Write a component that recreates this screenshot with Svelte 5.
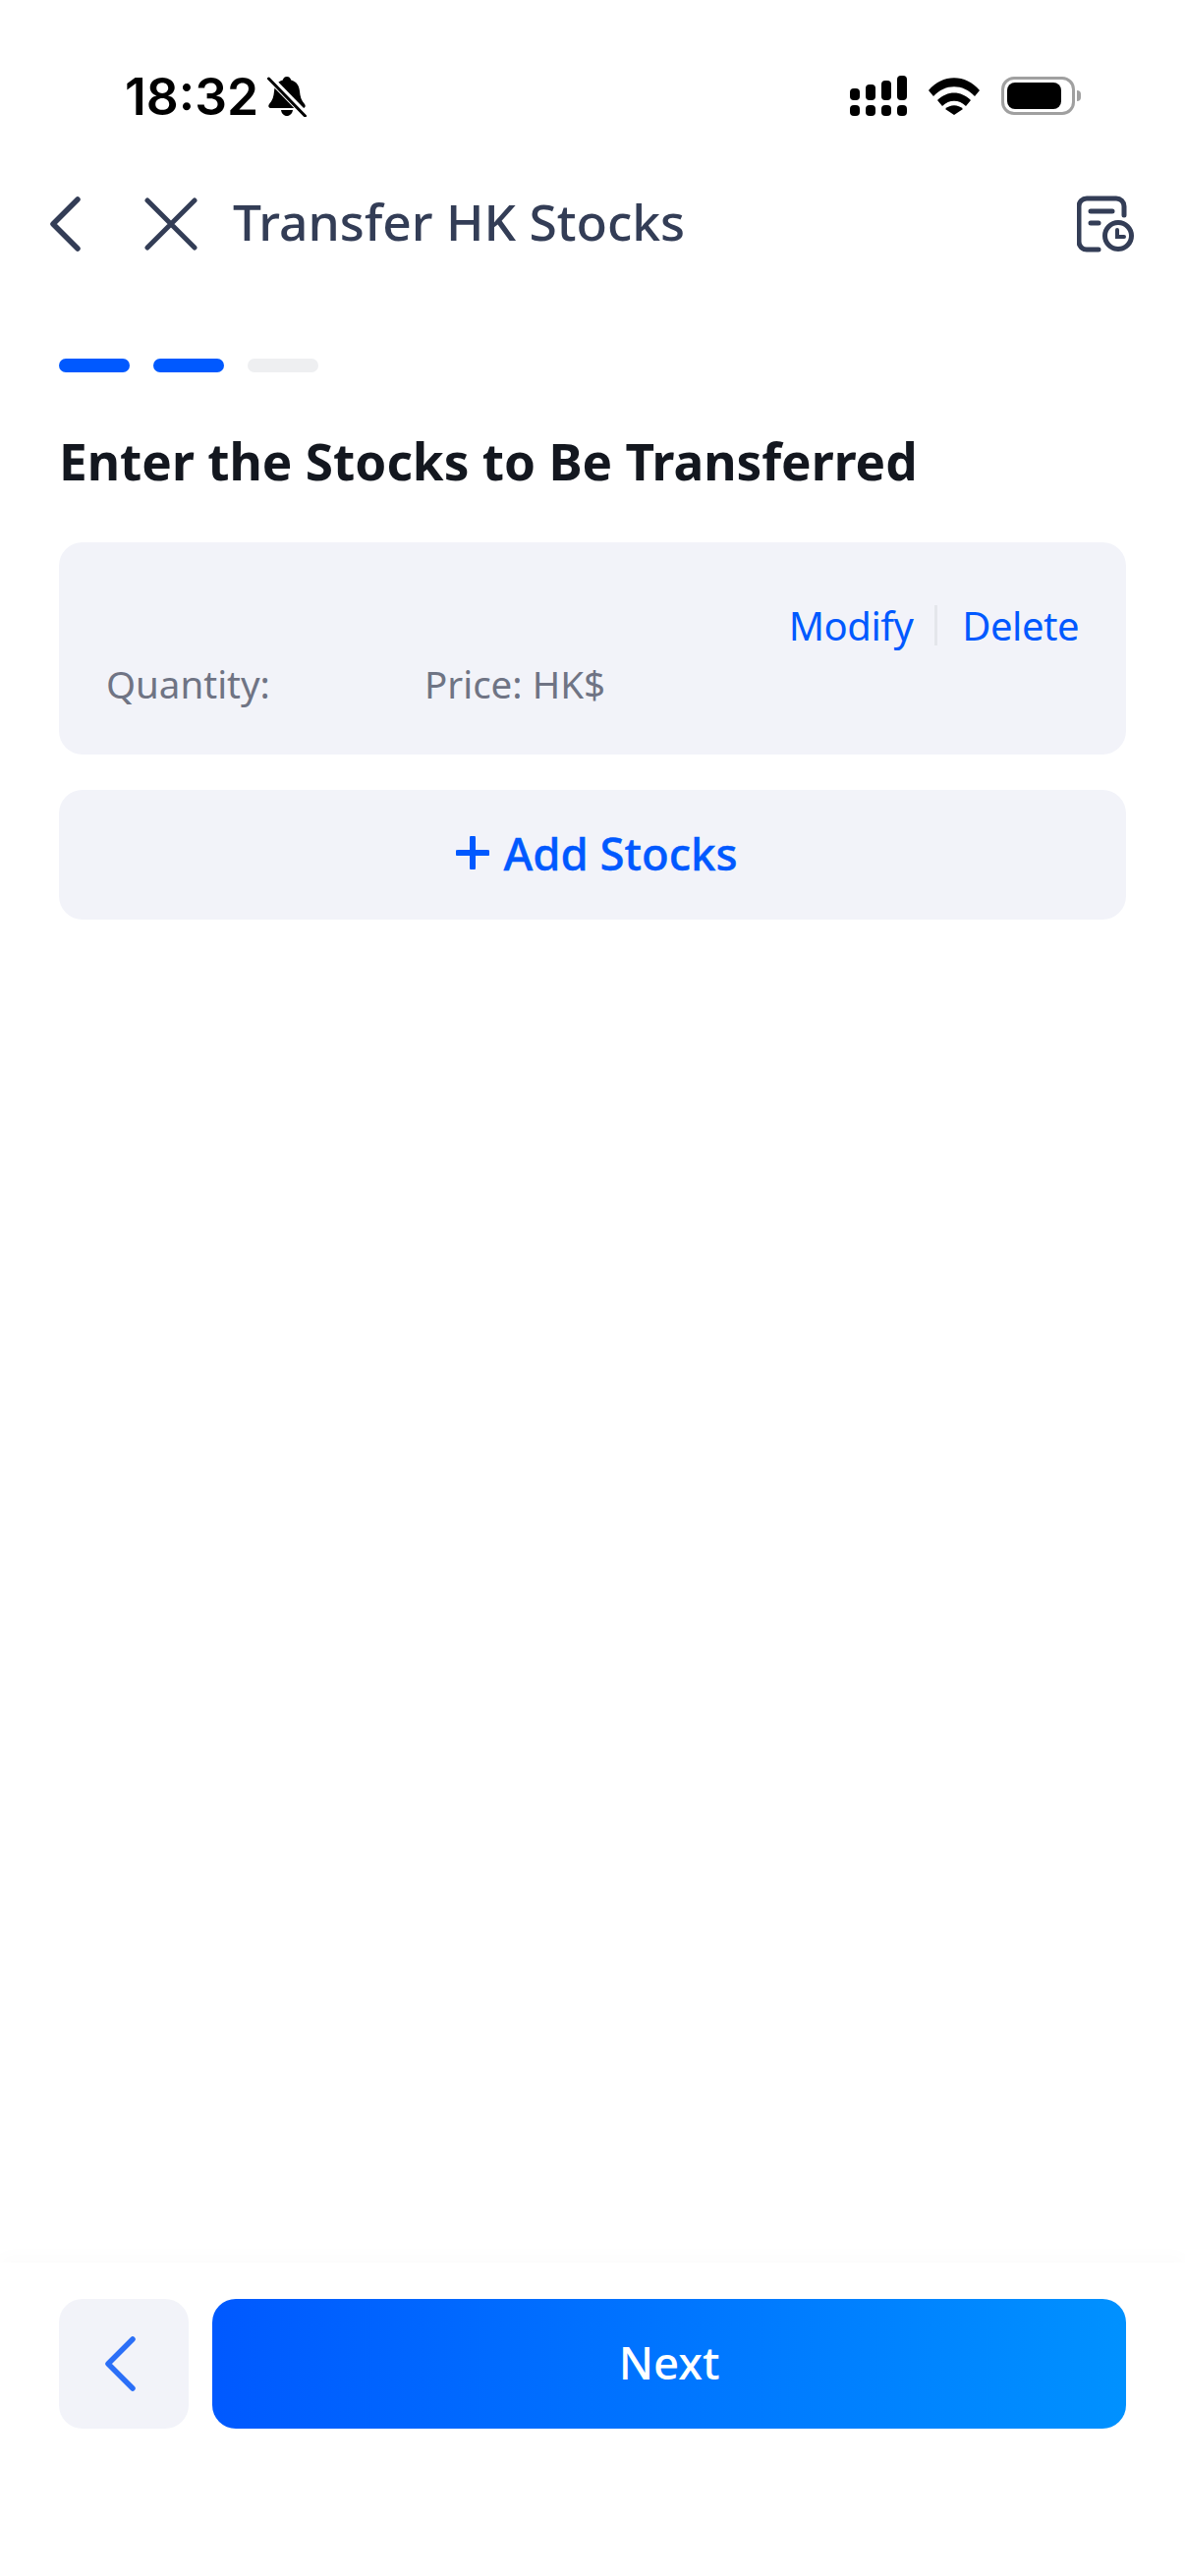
<script lang="ts">
  const steps = [true, true, false];
</script>

<div class="page">
  <!-- iOS status bar -->
  <div class="status">
    <div class="status-left">
      <span class="time">18:32</span>
      <svg class="bell" width="40" height="42" viewBox="0 0 40 42">
        <path d="M20 1c2.400 0 3.800 1.600 4.200 3.500C30 6 32.500 10.500 33 16c.4 5 1.500 9 5 13 1.500 2 .5 4-2 4H4c-2.500 0-3.500-2-2-4 3.500-4 4.600-8 5-13 .5-5.500 3-10 8.800-11.500C16.200 2.600 17.600 1 20 1zM14 35h12c-.5 3.500-3 6-6 6s-5.500-2.500-6-6z" fill="#000" />
        <path d="M2 2 39 40" stroke="#fff" stroke-width="7" />
        <path d="M1.500 3 38.500 41" stroke="#000" stroke-width="3" stroke-linecap="round" />
      </svg>
    </div>
    <div class="status-right">
      <svg width="58" height="41" viewBox="0 0 58 41" fill="#000">
        <rect x="0" y="13" width="10" height="12" rx="4" />
        <rect x="16" y="9" width="10" height="16" rx="4" />
        <rect x="32" y="5" width="10" height="20" rx="4" />
        <rect x="48" y="0" width="10" height="25" rx="4" />
        <rect x="0" y="30" width="10" height="11" rx="4" />
        <rect x="16" y="30" width="10" height="11" rx="4" />
        <rect x="32" y="30" width="10" height="11" rx="4" />
        <rect x="48" y="30" width="10" height="11" rx="4" />
      </svg>
      <svg class="wifi" width="52" height="38" viewBox="0 0 52 38" fill="#000">
        <path d="M0 13C14-4 38-4 52 13l-5 6C35 6 17 6 5 19z" />
        <path d="M9 23c10-10 24-10 34 0l-5 6c-7-7-17-7-24 0z" />
        <path d="M17 32c5-5 13-5 18 0l-9 6z" />
      </svg>
      <div class="battery">
        <div class="battery-body"><div class="battery-fill"></div></div>
        <div class="battery-nub"></div>
      </div>
    </div>
  </div>

  <!-- nav bar -->
  <div class="nav">
    <svg class="nav-back" width="32" height="56" viewBox="0 0 32 56" fill="none">
      <path d="M29 3 4 28l25 25" stroke="#333d56" stroke-width="5.500" stroke-linecap="round" stroke-linejoin="round" />
    </svg>
    <svg class="nav-close" width="54" height="54" viewBox="0 0 54 54" fill="none">
      <path d="M3 3l48 48M51 3 3 51" stroke="#333d56" stroke-width="5" stroke-linecap="round" />
    </svg>
    <span class="nav-title">Transfer HK Stocks</span>
    <svg class="nav-history" width="60" height="58" viewBox="0 0 60 58" fill="none" stroke="#333d56" stroke-linecap="round">
      <path d="M48 20V11a8 8 0 0 0-8-8H10a8 8 0 0 0-8 8v36a8 8 0 0 0 8 8h12" stroke-width="5" />
      <path d="M14 16h22" stroke-width="5" />
      <path d="M14 28h8" stroke-width="5" />
      <circle cx="42" cy="41" r="13.500" stroke-width="5" />
      <path d="M41 35v7h7" stroke-width="4" />
    </svg>
  </div>

  <main class="content">
    <div class="steps">
      {#each steps as done}
        <span class="step" class:done></span>
      {/each}
    </div>

    <h1>Enter the Stocks to Be Transferred</h1>

    <section class="card">
      <div class="actions">
        <span>Modify</span>
        <i class="sep"></i>
        <span>Delete</span>
      </div>
      <div class="meta">
        <span class="qty">Quantity:</span>
        <span>Price: HK$</span>
      </div>
    </section>

    <div class="add">
      <svg width="34" height="34" viewBox="0 0 34 34" fill="none">
        <path d="M17 2v30M2 17h30" stroke="#0059ff" stroke-width="6" stroke-linecap="round" />
      </svg>
      <span>Add Stocks</span>
    </div>
  </main>

  <footer class="footer">
    <div class="prev">
      <svg width="32" height="56" viewBox="0 0 32 56" fill="none">
        <path d="M29 3 4 28l25 25" stroke="#2b6ff7" stroke-width="5.500" stroke-linecap="round" stroke-linejoin="round" />
      </svg>
    </div>
    <div class="next">Next</div>
  </footer>
</div>

<style>
  :global(body) {
    margin: 0;
    background: #fff;
  }

  .page {
    width: 1206px;
    height: 2622px;
    display: flex;
    flex-direction: column;
    font-family: "Noto Sans", "Open Sans", sans-serif;
    overflow: hidden;
  }

  .status {
    height: 140px;
    flex-shrink: 0;
    display: flex;
    justify-content: space-between;
    align-items: flex-start;
    padding: 77px 106px 0 127px;
    box-sizing: border-box;
  }

  .status-left {
    display: flex;
    align-items: center;
    gap: 9px;
    height: 42px;
  }

  .time {
    font-family: Inter, sans-serif;
    font-weight: 600;
    font-size: 51.5px;
    line-height: 38px;
    color: #000;
  }

  .status-right {
    display: flex;
    align-items: center;
    gap: 22px;
  }

  .battery {
    display: flex;
    align-items: center;
    gap: 2px;
  }

  .battery-body {
    width: 75px;
    height: 39px;
    box-sizing: border-box;
    border: 3px solid #a0a0a0;
    border-radius: 13px;
    padding: 3px;
  }

  .battery-fill {
    width: 55px;
    height: 27px;
    background: #000;
    border-radius: 8px;
  }

  .battery-nub {
    width: 4px;
    height: 11px;
    background: #a0a0a0;
    border-radius: 0 4px 4px 0;
  }

  .nav {
    height: 176px;
    flex-shrink: 0;
    display: flex;
    align-items: center;
    padding: 0 50px 0 50px;
    box-sizing: border-box;
  }

  .nav-close {
    margin-left: 65px;
  }

  .nav-title {
    margin-left: 36px;
    font-size: 51.5px;
    line-height: 60px;
    padding-bottom: 6px;
    font-weight: 500;
    color: #333d56;
    flex: 1;
  }

  .content {
    flex: 1;
    padding: 49px 60px 0;
    display: flex;
    flex-direction: column;
  }

  .steps {
    display: flex;
    gap: 24px;
  }

  .step {
    width: 72px;
    height: 14px;
    border-radius: 7px;
    background: #eeeff1;
  }

  .step.done {
    background: #0059ff;
  }

  h1 {
    margin: 56px 0 0;
    font-size: 51.3px;
    line-height: 68px;
    font-weight: 700;
    color: #13171f;
  }

  .card {
    margin-top: 49px;
    height: 216px;
    box-sizing: border-box;
    background: #f2f3f9;
    border-radius: 24px;
    padding: 55px 48px 0;
  }

  .actions {
    display: flex;
    justify-content: flex-end;
    align-items: center;
    gap: 25px;
    height: 58px;
    font-size: 40px;
    letter-spacing: -0.5px;
    color: #0059ff;
  }

  .sep {
    width: 3px;
    height: 41px;
    margin-left: -3px;
    background: #e4e6eb;
  }

  .meta {
    display: flex;
    font-size: 38.5px;
    line-height: 54px;
    color: #6f7484;
    margin-top: 4px;
  }

  .qty {
    width: 324px;
  }

  .add {
    margin-top: 36px;
    height: 132px;
    padding-left: 9px;
    padding-bottom: 4px;
    box-sizing: border-box;
    background: #f2f3f9;
    border-radius: 24px;
    display: flex;
    align-items: center;
    justify-content: center;
    gap: 14px;
    font-size: 45.5px;
    font-weight: 500;
    color: #0059ff;
    -webkit-text-stroke: 0.4px #0059ff;
  }

  .footer {
    flex-shrink: 0;
    height: 319px;
    box-sizing: border-box;
    padding: 37px 60px 0;
    display: flex;
    gap: 24px;
    background: #fff;
    box-shadow: 0 -8px 16px rgba(40, 50, 90, 0.015);
  }

  .prev {
    width: 132px;
    height: 132px;
    padding-right: 8px;
    box-sizing: border-box;
    background: #f2f3f9;
    border-radius: 24px;
    display: flex;
    align-items: center;
    justify-content: center;
  }

  .next {
    flex: 1;
    height: 132px;
    padding-bottom: 4px;
    box-sizing: border-box;
    border-radius: 24px;
    background: linear-gradient(90deg, #0059ff 0%, #0091ff 100%);
    color: #fff;
    font-size: 45.5px;
    font-weight: 500;
    display: flex;
    align-items: center;
    justify-content: center;
  }
</style>
